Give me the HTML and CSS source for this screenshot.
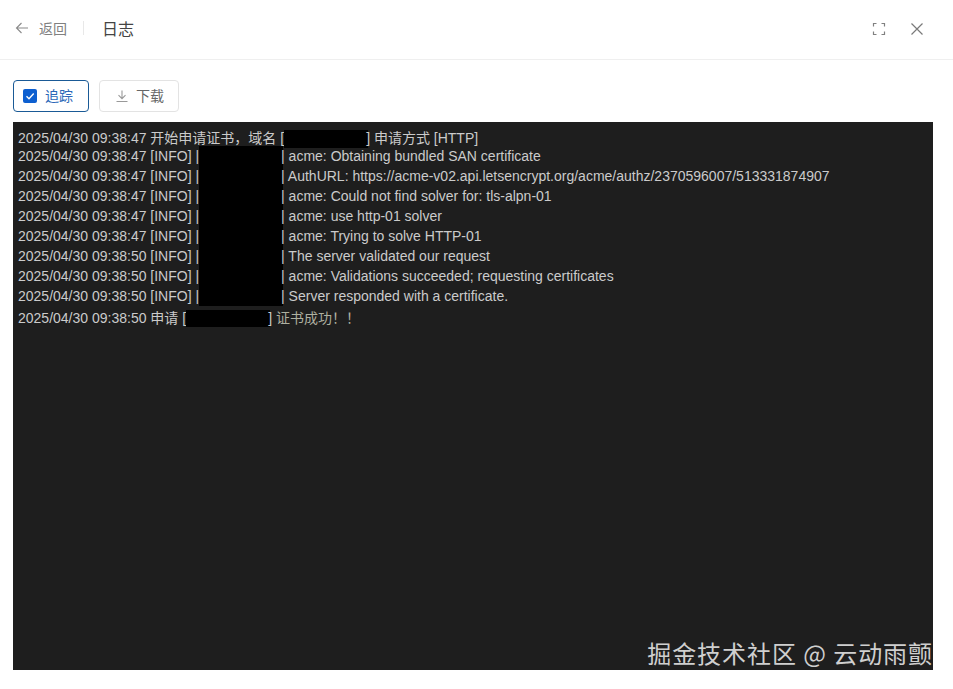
FILE: index.html
```html
<!DOCTYPE html>
<html lang="zh-CN">
<head>
<meta charset="utf-8">
<title>日志</title>
<link rel="stylesheet" href="styles.css">
</head>
<body>
<div class="page">
  <header class="header">
    <div class="header-left">
      <svg class="back-icon" viewBox="0 0 14 14" width="14" height="14"><path d="M13 7H1.500M6.500 2 1.500 7l5 5" fill="none" stroke="#8a8a8a" stroke-width="1.100"/></svg>
      <span class="back-text">返回</span>
      <span class="divider"></span>
      <span class="title">日志</span>
    </div>
    <div class="header-right">
      <svg viewBox="0 0 14 14" width="14" height="14"><path d="M1.500 4.500v-3h3M9.500 1.500h3v3M12.500 9.500v3h-3M4.500 12.500h-3v-3" fill="none" stroke="#808080" stroke-width="1.200"/></svg>
      <svg viewBox="0 0 16 16" width="16" height="16"><path d="M2.500 2.500l11 11M13.500 2.500l-11 11" fill="none" stroke="#7a7a7a" stroke-width="1.200"/></svg>
    </div>
  </header>
  <div class="toolbar">
    <button class="btn btn-check"><span class="checkbox"><svg viewBox="0 0 14 14" width="14" height="14"><path d="M3.500 7.200 6 9.700l4.700-5.200" fill="none" stroke="#fff" stroke-width="1.400"/></svg></span><span class="btn-label">追踪</span></button>
    <button class="btn btn-plain"><svg viewBox="0 0 14 14" width="14" height="14"><path d="M7 1.500v8M3.500 6.200 7 9.700l3.500-3.500M1.500 12.500h11" fill="none" stroke="#999" stroke-width="1.100"/></svg><span class="btn-label">下载</span></button>
  </div>
  <main class="terminal">
    <div class="line first">2025/04/30 09:38:47 开始申请证书，域名 [<span class="redact"></span>] 申请方式 [HTTP]</div>
    <div class="line">2025/04/30 09:38:47 [INFO] |<span class="redact"></span>| acme: Obtaining bundled SAN certificate</div>
    <div class="line">2025/04/30 09:38:47 [INFO] |<span class="redact"></span>| AuthURL: https://acme-v02.api.letsencrypt.org/acme/authz/2370596007/513331874907</div>
    <div class="line">2025/04/30 09:38:47 [INFO] |<span class="redact"></span>| acme: Could not find solver for: tls-alpn-01</div>
    <div class="line">2025/04/30 09:38:47 [INFO] |<span class="redact"></span>| acme: use http-01 solver</div>
    <div class="line">2025/04/30 09:38:47 [INFO] |<span class="redact"></span>| acme: Trying to solve HTTP-01</div>
    <div class="line">2025/04/30 09:38:50 [INFO] |<span class="redact"></span>| The server validated our request</div>
    <div class="line">2025/04/30 09:38:50 [INFO] |<span class="redact"></span>| acme: Validations succeeded; requesting certificates</div>
    <div class="line">2025/04/30 09:38:50 [INFO] |<span class="redact"></span>| Server responded with a certificate.</div>
    <div class="line last">2025/04/30 09:38:50 申请 [<span class="redact short"></span>] <span class="success">证书成功！！</span></div>
    <div class="watermark">掘金技术社区 @ 云动雨颤</div>
  </main>
</div>
</body>
</html>
```
FILE: styles.css
```css
* { box-sizing: border-box; }
html, body { margin: 0; height: 100%; background: #fff; }
body { font-family: "Liberation Sans", "Noto Sans CJK SC", sans-serif; }
.page { width: 953px; height: 689px; display: flex; flex-direction: column; overflow: hidden; }
.header { height: 60px; flex: none; display: flex; align-items: center; justify-content: space-between; padding: 0 28px 3px 15px; border-bottom: 1px solid #efefef; }
.header-left { display: flex; align-items: center; }
.header-right { display: flex; align-items: center; gap: 23px; margin-top: 2px; }
.back-text { margin-left: 10px; font-size: 14px; color: #808080; }
.divider { width: 1px; height: 14px; background: #e8e8e8; margin: 0 18px 0 16px; }
.title { font-size: 16px; color: #444; }
.toolbar { flex: none; display: flex; gap: 10px; padding: 20px 0 10px 13px; }
.btn { height: 32px; border-radius: 4px; background: #fff; display: flex; align-items: center; padding: 0; font: 14px "Liberation Sans", "Noto Sans CJK SC", sans-serif; }
.btn-label { position: relative; top: -1px; }
.btn-check { width: 76px; gap: 8px; padding-left: 9px; border: 1px solid #1a5a96; color: #2c68b8; }
.btn-plain { width: 80px; gap: 7px; padding-left: 15px; border: 1px solid #e3e3e3; color: #666; }
.checkbox { width: 14px; height: 14px; border-radius: 2px; background: #0d5fd0; display: flex; }
.terminal { position: relative; width: 920px; height: 548px; margin-left: 13px; flex: none; background: #1e1e1e; color: #cbcbcb; padding: 6px 5px; font-size: 14px; line-height: 20px; }
.line { height: 20px; white-space: nowrap; }
.line.first { height: 18px; }
.line.last { margin-top: 2px; }
.redact { display: inline-block; width: 84px; height: 20px; background: #000; vertical-align: top; margin: 0 -2px 0 0; }
.first .redact { height: 18px; margin-top: 2px; }
.last .redact { height: 17px; margin: 2px -2px 0 0; }
.success { color: #aeb0a0; }
.watermark { position: absolute; right: 0; bottom: 0; font-size: 24px; line-height: 34px; letter-spacing: 0.95px; color: #cfcfcf; font-family: "Noto Sans CJK SC", sans-serif; white-space: nowrap; }
```
